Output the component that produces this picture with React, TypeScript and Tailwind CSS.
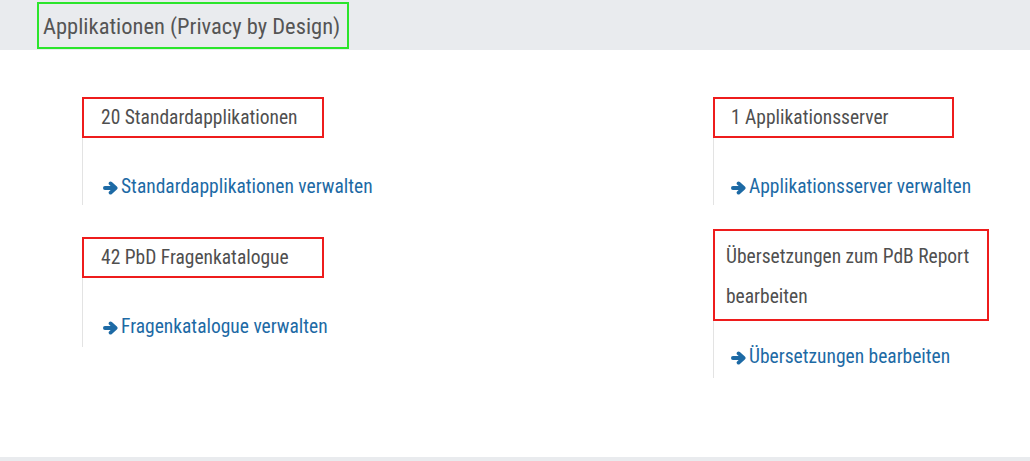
function Arrow() {
  return (
    <svg width="15" height="14" viewBox="0 0 15 14" className="shrink-0 mt-[1px]">
      <path
        d="M1.9 7H12M7.6 2.4L12.6 7L7.6 11.6"
        fill="none"
        stroke="currentColor"
        strokeWidth="3.8"
        strokeLinecap="round"
        strokeLinejoin="round"
      />
    </svg>
  );
}

function Block({
  title,
  link,
  titleClass,
  linkClass,
}: {
  title: React.ReactNode;
  link: string;
  titleClass: string;
  linkClass: string;
}) {
  return (
    <div className="flex flex-col">
      <div className={`border-2 border-[#ee1c1c] text-[#4f4f4f] whitespace-nowrap ${titleClass}`}>{title}</div>
      <div className={`border-l border-[#e3e3e3] ${linkClass}`}>
        <a className="flex items-center gap-[3px] text-[#1d6aa5] leading-[24px] whitespace-nowrap">
          <Arrow />
          <span>{link}</span>
        </a>
      </div>
    </div>
  );
}

export default function App() {
  return (
    <div className="w-[1030px] h-[461px] flex flex-col bg-white font-['Roboto',sans-serif] [font-stretch:75%] text-[19.5px]">
      <div className="h-[50px] bg-[#e9ebee] pl-[37px] pt-[2px]">
        <div className="inline-block border-2 border-[#2be52b] h-[47px] pl-[4px] pr-[7px] text-[22.5px] leading-[44px] text-[#555]">
          Applikationen (Privacy by Design)
        </div>
      </div>
      <div className="flex-1 flex pl-[82px] pt-[47px]">
        <div className="w-[631px] flex flex-col gap-[32px]">
          <div className="w-[242px]">
            <Block
              title="20 Standardapplikationen"
              titleClass="h-[41px] leading-[37px] pl-[17px]"
              link="Standardapplikationen verwalten"
              linkClass="h-[67px] pt-[37px] pl-[20px]"
            />
          </div>
          <div className="w-[242px]">
            <Block
              title="42 PbD Fragenkatalogue"
              titleClass="h-[41px] leading-[37px] pl-[17px]"
              link="Fragenkatalogue verwalten"
              linkClass="h-[69px] pt-[37px] pl-[20px]"
            />
          </div>
        </div>
        <div className="flex flex-col gap-[24px]">
          <div className="w-[241px]">
            <Block
              title="1 Applikationsserver"
              titleClass="h-[41px] leading-[37px] pl-[16px]"
              link="Applikationsserver verwalten"
              linkClass="h-[67px] pt-[37px] pl-[17px]"
            />
          </div>
          <div className="w-[276px]">
            <Block
              title={
                <>
                  Übersetzungen zum PdB Report
                  <br />
                  bearbeiten
                </>
              }
              titleClass="h-[92px] leading-[40px] pl-[11px] pt-[6px]"
              link="Übersetzungen bearbeiten"
              linkClass="h-[57px] pt-[24px] pl-[17px]"
            />
          </div>
        </div>
      </div>
      <div className="h-[4px] bg-[#e9ebee]" />
    </div>
  );
}
